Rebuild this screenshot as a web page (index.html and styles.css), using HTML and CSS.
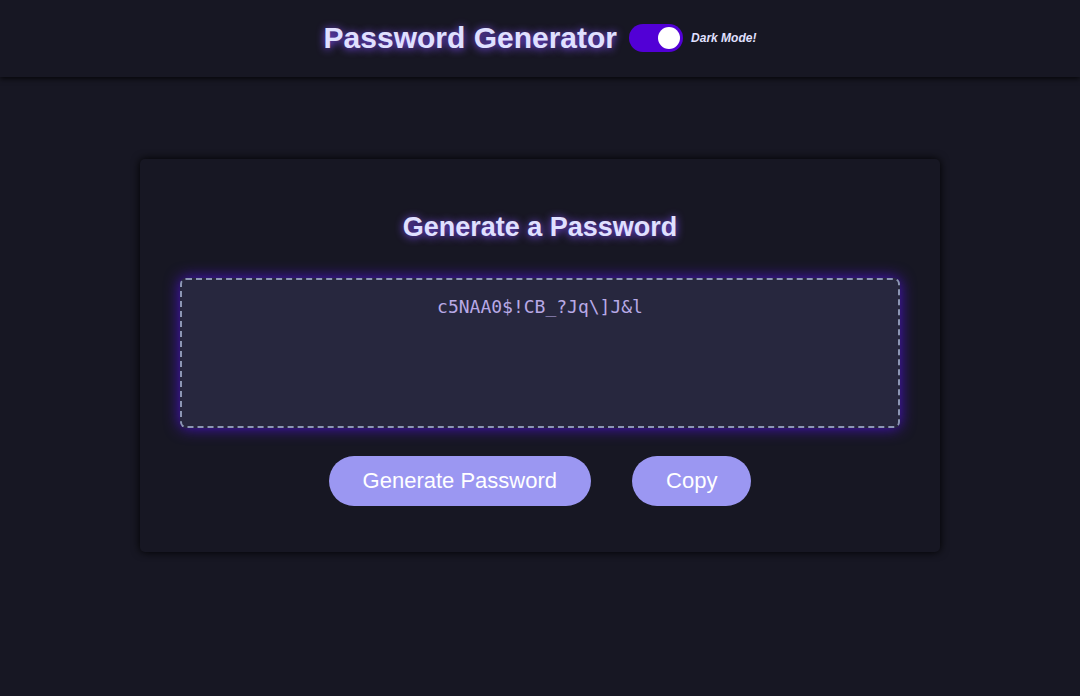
FILE: index.html
```html
<!DOCTYPE html>
<html lang="en">
<head>
<meta charset="utf-8">
<meta name="viewport" content="width=device-width, initial-scale=1">
<title>Password Generator</title>
<link rel="stylesheet" href="styles.css">
</head>
<body>
<header class="site-header">
  <h1 class="site-title">Password Generator</h1>
  <input class="switch" type="checkbox" role="switch" id="theme" checked>
  <label class="switch-label" for="theme">Dark Mode!</label>
</header>
<main class="card">
  <h2 class="card-title">Generate a Password</h2>
  <textarea class="password" aria-label="Your secure password" readonly spellcheck="false">c5NAA0$!CB_?Jq\]J&amp;l</textarea>
  <div class="actions">
    <button class="btn" type="button">Generate Password</button>
    <button class="btn" type="button">Copy</button>
  </div>
</main>
</body>
</html>
```
FILE: styles.css
```css
* {
  box-sizing: border-box;
}

body {
  margin: 0;
  background: #171723;
  color: #e0e0ff;
  font-family: "Liberation Sans", Arial, sans-serif;
}

.site-header {
  display: flex;
  align-items: center;
  justify-content: center;
  padding: 20px 20px 21px;
  box-shadow: 0 2px 5px rgba(0, 0, 0, 0.7);
}

.site-title,
.card-title {
  margin: 0;
  text-shadow: 0 1px 8px #8450ff;
}

.site-title {
  font-size: 30px;
  line-height: 36px;
}

.switch {
  appearance: none;
  display: flex;
  align-items: center;
  justify-content: flex-end;
  width: 54px;
  height: 28px;
  margin: 0 8px 0 12px;
  padding: 3px;
  border-radius: 14px;
  background: #5200d6;
  cursor: pointer;
}

.switch::before {
  content: "";
  width: 22px;
  height: 22px;
  border-radius: 50%;
  background: #fff;
}

.switch:not(:checked) {
  justify-content: flex-start;
  background: #777;
}

.switch-label {
  font-size: 12px;
  font-style: italic;
  font-weight: bold;
}

.card {
  max-width: 800px;
  margin: 82px auto 40px;
  padding: 50px 40px 46px;
  border-radius: 5px;
  box-shadow: 0 0 8px #000;
}

.card-title {
  font-size: 27px;
  line-height: 36px;
  text-align: center;
}

.password {
  display: block;
  width: 100%;
  height: 150px;
  margin: 33px 0 28px;
  padding: 15px;
  border: 2px dashed #8c96b4;
  border-radius: 6px;
  outline: none;
  resize: none;
  background: #27273e;
  color: #b8a9e6;
  font-family: "DejaVu Sans Mono", monospace;
  font-size: 18px;
  line-height: 24px;
  text-align: center;
  box-shadow: 0 0 15px #4a12c8;
}

.actions {
  display: flex;
  flex-wrap: wrap;
  justify-content: center;
  gap: 41px;
}

.btn {
  height: 50px;
  padding: 0 34px;
  border: 0;
  border-radius: 25px;
  background: #9b97f2;
  color: #fff;
  font-family: inherit;
  font-size: 22px;
  cursor: pointer;
}
```
